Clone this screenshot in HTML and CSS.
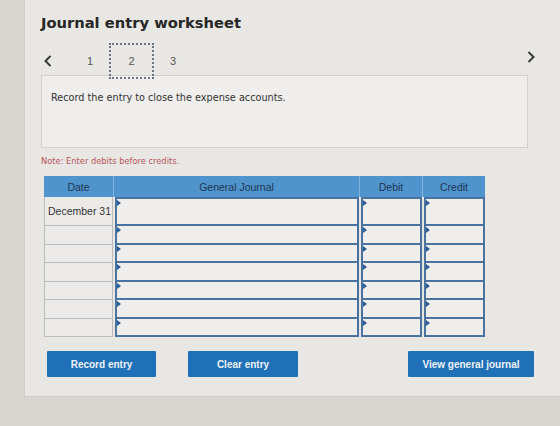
FILE: index.html
```html
<!DOCTYPE html>
<html lang="en">
<head>
<meta charset="utf-8">
<title>Journal entry worksheet</title>
<link rel="stylesheet" href="styles.css">
</head>
<body>
<div class="panel">
  <h1 class="title">Journal entry worksheet</h1>

  <div class="pager">
    <button class="arrow" aria-label="Previous">
      <svg width="10" height="12" viewBox="0 0 10 12"><path d="M7.5 1 L2.5 6 L7.5 11" fill="none" stroke="#3a3a3a" stroke-width="2"/></svg>
    </button>
    <span class="page">1</span>
    <span class="page current">2</span>
    <span class="page">3</span>
    <button class="arrow next" aria-label="Next">
      <svg width="10" height="12" viewBox="0 0 10 12"><path d="M2.5 1 L7.5 6 L2.5 11" fill="none" stroke="#3a3a3a" stroke-width="2"/></svg>
    </button>
  </div>

  <div class="prompt">Record the entry to close the expense accounts.</div>

  <p class="note">Note: Enter debits before credits.</p>

  <table class="journal">
    <thead>
      <tr>
        <th class="c-date">Date</th>
        <th class="c-acct">General Journal</th>
        <th class="c-amt">Debit</th>
        <th class="c-amt">Credit</th>
      </tr>
    </thead>
    <tbody>
      <tr class="first">
        <td class="date">December 31</td>
        <td class="in"><div class="field"></div></td>
        <td class="in"><div class="field"></div></td>
        <td class="in"><div class="field"></div></td>
      </tr>
      <tr><td class="date"></td><td class="in"><div class="field"></div></td><td class="in"><div class="field"></div></td><td class="in"><div class="field"></div></td></tr>
      <tr><td class="date"></td><td class="in"><div class="field"></div></td><td class="in"><div class="field"></div></td><td class="in"><div class="field"></div></td></tr>
      <tr><td class="date"></td><td class="in"><div class="field"></div></td><td class="in"><div class="field"></div></td><td class="in"><div class="field"></div></td></tr>
      <tr><td class="date"></td><td class="in"><div class="field"></div></td><td class="in"><div class="field"></div></td><td class="in"><div class="field"></div></td></tr>
      <tr><td class="date"></td><td class="in"><div class="field"></div></td><td class="in"><div class="field"></div></td><td class="in"><div class="field"></div></td></tr>
      <tr><td class="date"></td><td class="in"><div class="field"></div></td><td class="in"><div class="field"></div></td><td class="in"><div class="field"></div></td></tr>
    </tbody>
  </table>

  <div class="actions">
    <button class="btn btn-record">Record entry</button>
    <button class="btn btn-clear">Clear entry</button>
    <button class="btn btn-view">View general journal</button>
  </div>
</div>
</body>
</html>
```

FILE: styles.css
```css
html, body {
  margin: 0;
  padding: 0;
}

body {
  background: #d8d5d1;
  width: 560px;
  height: 426px;
  overflow: hidden;
  font-family: "DejaVu Sans", Verdana, sans-serif;
  color: #333;
}

.panel {
  margin-left: 24px;
  width: 536px;
  height: 397px;
  box-sizing: border-box;
  padding: 13px 32px 0 16px;
  background: #e8e7e4;
  border-left: 1px solid #d0cecb;
  border-bottom: 1px solid #cfcdca;
}

.title {
  margin: 0;
  font-size: 14.7px;
  line-height: 20px;
  font-weight: bold;
  color: #262626;
}

/* step pager */
.pager {
  display: flex;
  align-items: center;
  height: 36px;
  margin-top: 10px;
  margin-right: -10px;
  position: relative;
  z-index: 1;
}

.arrow {
  background: none;
  border: 0;
  padding: 0;
  width: 14px;
  height: 14px;
  display: flex;
  align-items: center;
  justify-content: center;
}

.arrow.next {
  margin-left: auto;
  margin-top: -8px;
}

.page {
  font-family: "Liberation Sans", Arial, sans-serif;
  font-size: 11px;
  color: #555;
  width: 45px;
  height: 36px;
  box-sizing: border-box;
  display: flex;
  align-items: center;
  justify-content: center;
}

.page:first-of-type {
  margin-left: 0;
  width: 54px;
  justify-content: flex-start;
  padding-left: 32px;
}

.page:last-of-type {
  width: 38px;
}

.page.current {
  border: 2px dotted #6a7380;
}

/* question prompt */
.prompt {
  margin-top: -4px;
  height: 73px;
  box-sizing: border-box;
  border: 1px solid #d2d1ce;
  background: #efeeec;
  padding: 16px 9px 0;
  font-size: 9.7px;
  color: #333;
}

.note {
  margin: 7px 0 0;
  font-size: 8.3px;
  color: #b8535a;
  line-height: 12px;
}

/* journal table */
.journal {
  margin: 9px 0 0 3px;
  width: 440px;
  border-collapse: separate;
  border-spacing: 0;
  table-layout: fixed;
  font-family: "Liberation Sans", Arial, sans-serif;
}

.journal th {
  background: #4f94cc;
  color: #1f3652;
  font-size: 10.5px;
  font-weight: normal;
  height: 21px;
  padding: 0;
  border-left: 1px solid #84b4dc;
  box-sizing: border-box;
}

.journal th:first-child {
  border-left: 0;
}

.c-date { width: 69px; }
.c-acct { width: 246px; }
.c-amt { width: 63px; }

.journal td {
  padding: 0;
  height: 18.5px;
  box-sizing: border-box;
}

.journal tr.first td {
  height: 29px;
}

.journal td.date {
  background: #ebeae8;
  border: 1px solid #bcbcbc;
  border-top: 0;
  font-size: 10.5px;
  color: #333;
  padding-left: 3px;
  white-space: nowrap;
}

.journal td.in {
  padding-left: 2px;
}

.field {
  position: relative;
  height: 18.5px;
  box-sizing: border-box;
  background: #efeeec;
  border: 2px solid #4a73a0;
  border-top: 0;
}

.journal tr.first .field {
  height: 29px;
  border-top: 2px solid #4a73a0;
}

/* drop-down marker on each entry field */
.field::before {
  content: "";
  position: absolute;
  left: 0;
  top: 1px;
  border-top: 3px solid transparent;
  border-bottom: 3px solid transparent;
  border-left: 4px solid #2a5c98;
}

/* action buttons */
.actions {
  display: flex;
  margin: 14px -6px 0 6px;
}

.btn {
  height: 26px;
  border: 0;
  border-radius: 1px;
  background: #1f70b6;
  color: #eef3f8;
  font-family: "Liberation Sans", Arial, sans-serif;
  font-weight: bold;
  font-size: 10px;
  padding: 0;
}

.btn-record { width: 109px; }
.btn-clear { width: 110px; margin-left: 32px; }
.btn-view { width: 126px; margin-left: auto; }
```
